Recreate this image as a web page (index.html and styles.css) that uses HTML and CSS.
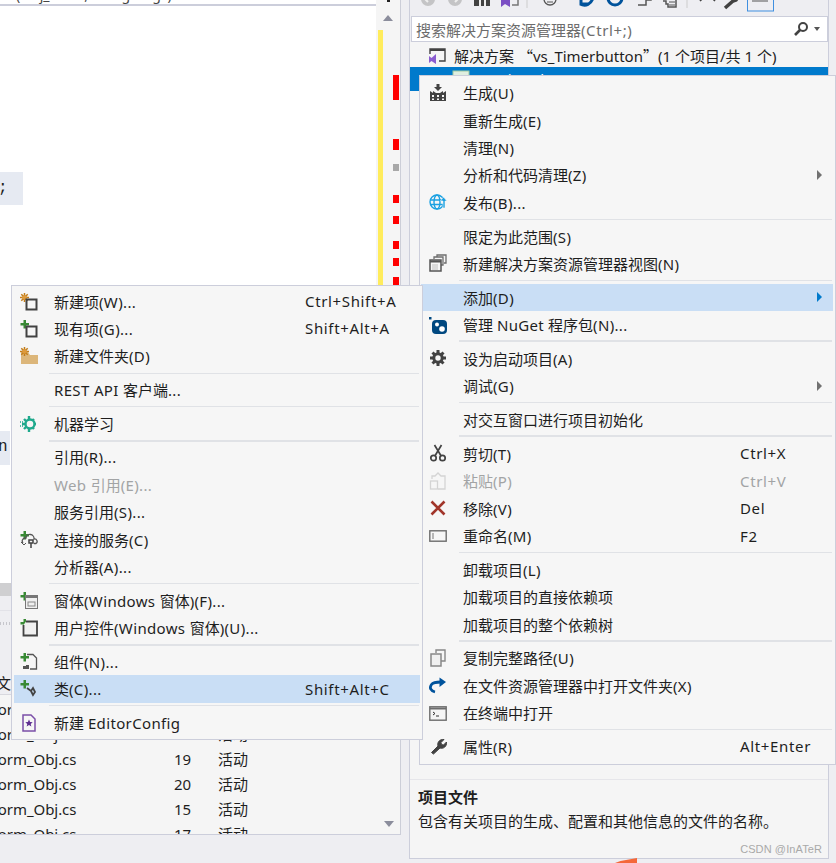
FILE: index.html
```html
<!DOCTYPE html>
<html lang="zh">
<head>
<meta charset="utf-8">
<title>vs_Timerbutton</title>
<link rel="stylesheet" href="styles.css">
</head>
<body>
<div class="ide">
  <section class="left-col">
    <div class="editor">
      <div class="code">
        <div class="code-top"><span class="code-top-text">(Obj_Form, string targs)</span></div>
        <div class="code-line hl-a">;</div>
        <div class="code-line hl-b">n</div>
        <div class="hscroll"></div>
      </div>
      <div class="overview">
        <span class="ov-arrow-top"></span>
        <span class="ov-arrow-up"></span>
        <span class="ov-yellow"></span>
        <span class="ov-mark" style="top:75px;height:25px"></span>
        <span class="ov-mark" style="top:139px;height:11px"></span>
        <span class="ov-mark grey" style="top:164px;height:7px"></span>
        <span class="ov-mark" style="top:195px;height:8px"></span>
        <span class="ov-mark" style="top:216px;height:8px"></span>
        <span class="ov-mark" style="top:241px;height:8px"></span>
        <span class="ov-mark" style="top:258px;height:8px"></span>
        <span class="ov-mark" style="top:277px;height:8px"></span>
      </div>
    </div>
    <div class="errors">
      <div class="errors-head"><span class="grip"></span><span class="col-head">文件</span></div>
      <div class="errors-rows">
        <div class="e-row"><span class="e-file">Form_Obj.cs</span><span class="e-num">18</span><span class="e-state">活动</span></div>
        <div class="e-row"><span class="e-file">Form_Obj.cs</span><span class="e-num">18</span><span class="e-state">活动</span></div>
        <div class="e-row"><span class="e-file">Form_Obj.cs</span><span class="e-num">19</span><span class="e-state">活动</span></div>
        <div class="e-row"><span class="e-file">Form_Obj.cs</span><span class="e-num">20</span><span class="e-state">活动</span></div>
        <div class="e-row"><span class="e-file">Form_Obj.cs</span><span class="e-num">15</span><span class="e-state">活动</span></div>
        <div class="e-row"><span class="e-file">Form_Obj.cs</span><span class="e-num">17</span><span class="e-state">活动</span></div>
        <span class="e-down"></span>
      </div>
    </div>
  </section>

  <section class="right-col">
    <div class="panel">
      <div class="toolbar">
        <svg class="tb-svg" width="364" height="22" viewBox="0 0 364 22">
          <circle cx="8" cy="5" r="7" fill="#c4c4c6"/><path d="M11 5H5M8 2L5 5l3 3" stroke="#eee" stroke-width="2" fill="none"/>
          <circle cx="35" cy="5" r="7" fill="#c4c4c6"/><path d="M32 5h6M35 2l3 3-3 3" stroke="#eee" stroke-width="2" fill="none"/>
          <path d="M54 0h16v12H54z" fill="#424242"/><path d="M59 6h2v6h-2zM64 6h2v6h-2z" fill="#eee"/>
          <path d="M81 3l4 3 5-5v12l-5-3-4 3z" fill="#7b4fc4"/><path d="M92 5h6v6h-6" fill="none" stroke="#777" stroke-width="1.5"/>
          <path d="M107 0v14" stroke="#ccc"/>
          <circle cx="130" cy="5" r="6" fill="none" stroke="#555" stroke-width="1.3"/><path d="M127 8h6" stroke="#555"/>
          <path d="M160 10c6 3 11 0 13-6M161 3v7h8" fill="none" stroke="#00539c" stroke-width="3"/>
          <circle cx="195" cy="4" r="7" fill="none" stroke="#00539c" stroke-width="3"/>
          <path d="M218 11h8V3M226 6h5V3" fill="none" stroke="#555" stroke-width="1.5"/>
          <path d="M243 7h3v3h2v3h8V3" fill="none" stroke="#555" stroke-width="1.5"/><path d="M249 8h6M249 11h6" stroke="#555"/>
          <path d="M267 0v14" stroke="#ccc"/>
          <path d="M283 4l-3 3M292 4l3 3" stroke="#424242" stroke-width="1.6" fill="none"/>
          <path d="M305 14l8-7 3-1 3-4" stroke="#424242" stroke-width="3.5" fill="none"/>
          <rect x="327.500" y="0" width="26" height="17" fill="none" stroke="#3f8fe0"/><path d="M332 7h16" stroke="#555"/>
        </svg>
      </div>
      <div class="search">
        <span class="search-text">搜索解决方案资源管理器<span class="wide">(Ctrl+;)</span></span>
        <svg width="16" height="16" viewBox="0 0 16 16" class="search-icon"><circle cx="10" cy="6" r="4" fill="none" stroke="#424242" stroke-width="2"/><path d="M7 9l-5 5" stroke="#424242" stroke-width="2.600"/></svg>
        <span class="search-caret"></span>
      </div>
      <div class="tree">
        <div class="tree-row">
          <svg width="18" height="18" viewBox="0 0 18 18"><path d="M2 7V2h15v12h-6" fill="none" stroke="#424242" stroke-width="1.400"/><path d="M2 3h15" stroke="#424242" stroke-width="2"/><path d="M1 9l2.500 2L8 7v10l-4.500-3L1 16z" fill="#8a5cd0"/></svg>
          <span class="tree-text">解决方案 <span class="cjk-q">“</span>vs_Timerbutton<span class="cjk-q">”</span>(1 个项目/共 1 个)</span>
        </div>
        <div class="tree-row sel">
          <svg width="18" height="18" viewBox="0 0 18 18"><rect x="1" y="1" width="16" height="16" fill="#dfeee0" stroke="#9fc99f"/></svg>
          <span>vs_Timerbutton</span>
        </div>
      </div>
      <div class="props">
        <div class="props-title">项目文件</div>
        <div class="props-desc">包含有关项目的生成、配置和其他信息的文件的名称。</div>
        <div class="watermark">CSDN @InATeR</div>
      </div>
    </div>
    <span class="orange"></span>
  </section>
</div>

<nav class="menu menu-main">
  <div class="mi"><span class="ic"><svg width="18" height="18" viewBox="0 0 18 18"><path d="M7.500 0h3v3H13L9 7 5 3h2.500z" fill="#424242"/><path d="M1 7l3 2V7l3 2 4 0 3-2v2l3-2v10H1z" fill="#424242"/><path d="M3 11h2v2H3zM8 11h2v2H8zM13 11h2v2h-2zM3 14.500h2v1.500H3zM8 14.500h2v1.500H8zM13 14.500h2v1.500h-2z" fill="#f6f6f6"/></svg></span><span class="lb">生成<span class="lat">(U)</span></span></div>
  <div class="mi"><span class="ic"></span><span class="lb">重新生成<span class="lat">(E)</span></span></div>
  <div class="mi"><span class="ic"></span><span class="lb">清理<span class="lat">(N)</span></span></div>
  <div class="mi"><span class="ic"></span><span class="lb">分析和代码清理<span class="lat">(Z)</span></span><span class="sub"></span></div>
  <div class="mi"><span class="ic"><svg width="18" height="18" viewBox="0 0 18 18"><g fill="none" stroke="#1ba1e2" stroke-width="1.400"><circle cx="8" cy="9" r="7"/><ellipse cx="8" cy="9" rx="3" ry="7"/><path d="M1 7h14M1 11.500h14"/></g><path d="M14 15V8h-2.500L14.500 4l3.500 4h-2v7z" fill="#1ba1e2" stroke="#f6f6f6" stroke-width=".6"/></svg></span><span class="lb">发布<span class="lat">(B)...</span></span></div>
  <div class="sp"></div>
  <div class="mi"><span class="ic"></span><span class="lb">限定为此范围<span class="lat">(S)</span></span></div>
  <div class="mi"><span class="ic"><svg width="18" height="18" viewBox="0 0 18 18"><g fill="none" stroke="#6d6d6d" stroke-width="1.300"><path d="M5 5V3h9v8h-2"/><path d="M8 3V1h9v8h-2"/></g><rect x="1" y="6" width="11" height="11" fill="#f6f6f6" stroke="#555" stroke-width="1.500"/><path d="M1 7.500h11" stroke="#555" stroke-width="2"/><path d="M3.500 11h6M3.500 13h6M3.500 15h6" stroke="#888" stroke-dasharray="1 1"/></svg></span><span class="lb">新建解决方案资源管理器视图<span class="lat">(N)</span></span></div>
  <div class="sp"></div>
  <div class="mi on"><span class="ic"></span><span class="lb">添加<span class="lat">(D)</span></span><span class="sub blue"></span></div>
  <div class="mi"><span class="ic"><svg width="18" height="18" viewBox="0 0 18 18"><rect x="3" y="4" width="15" height="14" rx="4" fill="#004880"/><rect x="0" y="1" width="2.500" height="2.500" fill="#004880"/><circle cx="8" cy="8.500" r="2" fill="#fff"/><circle cx="13" cy="13" r="2.800" fill="#fff"/></svg></span><span class="lb">管理 <span class="lat">NuGet</span> 程序包<span class="lat">(N)...</span></span></div>
  <div class="sp bold"></div>
  <div class="mi"><span class="ic"><svg width="18" height="18" viewBox="0 0 18 18"><path d="M9 1v16M1 9h16M3.500 3.500l11 11M14.500 3.500l-11 11" stroke="#424242" stroke-width="3"/><circle cx="9" cy="9" r="4.200" fill="#f6f6f6" stroke="#424242" stroke-width="3"/></svg></span><span class="lb">设为启动项目<span class="lat">(A)</span></span></div>
  <div class="mi"><span class="ic"></span><span class="lb">调试<span class="lat">(G)</span></span><span class="sub"></span></div>
  <div class="sp"></div>
  <div class="mi"><span class="ic"></span><span class="lb">对交互窗口进行项目初始化</span></div>
  <div class="sp bold"></div>
  <div class="mi"><span class="ic"><svg width="18" height="18" viewBox="0 0 18 18"><g fill="none" stroke="#424242" stroke-width="1.700"><circle cx="4.500" cy="14" r="2.700"/><circle cx="13.500" cy="14" r="2.700"/><path d="M6 11.800L12.500 1M12 11.800L5.500 1"/></g></svg></span><span class="lb">剪切<span class="lat">(T)</span></span><span class="sc">Ctrl+X</span></div>
  <div class="mi dis"><span class="ic"><svg width="18" height="18" viewBox="0 0 18 18"><g fill="none" stroke="#d4d4d4" stroke-width="1.300"><path d="M3 7V4h3l3-3 3 3h4v13H9"/><rect x="1.500" y="9" width="7" height="8"/></g></svg></span><span class="lb">粘贴<span class="lat">(P)</span></span><span class="sc">Ctrl+V</span></div>
  <div class="mi"><span class="ic"><svg width="18" height="18" viewBox="0 0 18 18"><path d="M2.500 2.500l13 13M15.500 2.500l-13 13" stroke="#a1352a" stroke-width="2.600"/></svg></span><span class="lb">移除<span class="lat">(V)</span></span><span class="sc">Del</span></div>
  <div class="mi"><span class="ic"><svg width="18" height="18" viewBox="0 0 18 18"><rect x=".8" y="3.800" width="16.400" height="10.400" fill="#f6f6f6" stroke="#6d6d6d" stroke-width="1.400"/><path d="M4 6v6" stroke="#777"/></svg></span><span class="lb">重命名<span class="lat">(M)</span></span><span class="sc">F2</span></div>
  <div class="sp"></div>
  <div class="mi"><span class="ic"></span><span class="lb">卸载项目<span class="lat">(L)</span></span></div>
  <div class="mi"><span class="ic"></span><span class="lb">加载项目的直接依赖项</span></div>
  <div class="mi"><span class="ic"></span><span class="lb">加载项目的整个依赖树</span></div>
  <div class="sp bold"></div>
  <div class="mi"><span class="ic"><svg width="18" height="18" viewBox="0 0 18 18"><path d="M7 4V1h9v11h-4" fill="none" stroke="#888" stroke-width="1.400"/><rect x="2" y="5" width="10" height="12" fill="#f0f0f0" stroke="#888" stroke-width="1.500"/></svg></span><span class="lb">复制完整路径<span class="lat">(U)</span></span></div>
  <div class="mi"><span class="ic"><svg width="18" height="18" viewBox="0 0 18 18"><path d="M6 16C2 15 0 12 2.500 8.500 4 6.500 7 6 12 6" fill="none" stroke="#00539c" stroke-width="2.800"/><path d="M10.500 1.500L17 6l-6.500 5z" fill="#00539c"/></svg></span><span class="lb">在文件资源管理器中打开文件夹<span class="lat">(X)</span></span></div>
  <div class="mi"><span class="ic"><svg width="18" height="18" viewBox="0 0 18 18"><rect x=".8" y="2.800" width="16.400" height="13.400" fill="#f6f6f6" stroke="#6d6d6d" stroke-width="1.400"/><path d="M1 4.500h16" stroke="#6d6d6d" stroke-width="2"/><path d="M4 8l2 1.500L4 11M7 12h3" fill="none" stroke="#333" stroke-width="1"/></svg></span><span class="lb">在终端中打开</span></div>
  <div class="sp"></div>
  <div class="mi"><span class="ic"><svg width="18" height="18" viewBox="0 0 18 18"><path d="M2.500 15.500L9 9c-1-3 1-7 6-6.500L12 5.500l.5 2 2 .5 3-3c.5 5-3.500 7-6.500 6l-6.500 6z" fill="#424242" stroke="#424242"/></svg></span><span class="lb">属性<span class="lat">(R)</span></span><span class="sc">Alt+Enter</span></div>
</nav>

<nav class="menu menu-add">
  <div class="mi"><span class="ic"><svg width="18" height="18" viewBox="0 0 18 18"><use href="#star"/><rect x="6.500" y="6.500" width="10" height="10" fill="none" stroke="#424242" stroke-width="2"/></svg></span><span class="lb">新建项<span class="lat">(W)...</span></span><span class="sc">Ctrl+Shift+A</span></div>
  <div class="mi"><span class="ic"><svg width="18" height="18" viewBox="0 0 18 18"><use href="#plus"/><rect x="6.500" y="6.500" width="10" height="10" fill="none" stroke="#424242" stroke-width="2"/></svg></span><span class="lb">现有项<span class="lat">(G)...</span></span><span class="sc">Shift+Alt+A</span></div>
  <div class="mi"><span class="ic"><svg width="18" height="18" viewBox="0 0 18 18"><path d="M1 5h7l2 3h8v9H1z" fill="#dcb67a"/><use href="#star"/></svg></span><span class="lb">新建文件夹<span class="lat">(D)</span></span></div>
  <div class="sp"></div>
  <div class="mi"><span class="ic"></span><span class="lb"><span class="lat">REST API </span>客户端<span class="lat">...</span></span></div>
  <div class="sp"></div>
  <div class="mi"><span class="ic"><svg width="18" height="18" viewBox="0 0 18 18"><path d="M9 1v16M2 9h14M4 4l10 10M14 4L4 14" stroke="#1fa98c" stroke-width="2.400"/><circle cx="10" cy="9" r="4.500" fill="#f6f6f6" stroke="#1fa98c" stroke-width="2.400"/><path d="M0 7h3M0 11h3" stroke="#1fa98c" stroke-width="1.400" stroke-dasharray="1 1"/></svg></span><span class="lb">机器学习</span></div>
  <div class="sp bold"></div>
  <div class="mi"><span class="ic"></span><span class="lb">引用<span class="lat">(R)...</span></span></div>
  <div class="mi dis"><span class="ic"></span><span class="lb"><span class="lat">Web </span>引用<span class="lat">(E)...</span></span></div>
  <div class="mi"><span class="ic"></span><span class="lb">服务引用<span class="lat">(S)...</span></span></div>
  <div class="mi"><span class="ic"><svg width="18" height="18" viewBox="0 0 18 18"><use href="#plus"/><path d="M3 12a3 3 0 0 1 2-5h1a4 4 0 0 1 8 1 2.500 2.500 0 0 1 2 4.500H14" fill="none" stroke="#555" stroke-width="1.300"/><path d="M9 9h4v3h-4zM11 12v5" fill="none" stroke="#424242" stroke-width="1.500"/><path d="M1 11l3 3 2-2" fill="none" stroke="#555"/></svg></span><span class="lb">连接的服务<span class="lat">(C)</span></span></div>
  <div class="mi"><span class="ic"></span><span class="lb">分析器<span class="lat">(A)...</span></span></div>
  <div class="sp"></div>
  <div class="mi"><span class="ic"><svg width="18" height="18" viewBox="0 0 18 18"><use href="#plus"/><rect x="5.500" y="3.500" width="12" height="13" fill="#f0f0f0" stroke="#777"/><path d="M6 5h11" stroke="#777" stroke-width="2"/><rect x="8" y="10" width="7" height="4" fill="none" stroke="#888"/></svg></span><span class="lb">窗体<span class="lat">(Windows </span>窗体<span class="lat">)(F)...</span></span></div>
  <div class="mi"><span class="ic"><svg width="18" height="18" viewBox="0 0 18 18"><use href="#plus"/><path d="M6 2.500h11v14H3.500V6" fill="#f0f0f0" stroke="#424242" stroke-width="1.800"/></svg></span><span class="lb">用户控件<span class="lat">(Windows </span>窗体<span class="lat">)(U)...</span></span></div>
  <div class="sp bold"></div>
  <div class="mi"><span class="ic"><svg width="18" height="18" viewBox="0 0 18 18"><use href="#plus"/><path d="M7 1.500h6l3.500 3.500v11H10" fill="none" stroke="#555" stroke-width="1.300"/><path d="M3 13h3v3H3zM6 12h3v4H6z" fill="#555"/></svg></span><span class="lb">组件<span class="lat">(N)...</span></span></div>
  <div class="mi on"><span class="ic"><svg width="18" height="18" viewBox="0 0 18 18"><use href="#plus"/><path d="M7 8l4 3 2-3 2 4-2 3-2-4" fill="none" stroke="#424242" stroke-width="1.800"/></svg></span><span class="lb">类<span class="lat">(C)...</span></span><span class="sc">Shift+Alt+C</span></div>
  <div class="sp"></div>
  <div class="mi"><span class="ic"><svg width="18" height="18" viewBox="0 0 18 18"><path d="M3 1h8l4 4v12H3z" fill="#f6f6f6" stroke="#7b4fa8" stroke-width="1.500"/><path d="M9 5.500l1.100 2.500 2.600.2-2 1.700.7 2.600L9 11.100l-2.400 1.400.7-2.600-2-1.700 2.600-.2z" fill="#5e2d91"/></svg></span><span class="lb">新建 <span class="lat">EditorConfig</span></span></div>
</nav>

<svg class="defs" width="0" height="0">
  <defs>
    <g id="plus"><path d="M3.500 0h2.500v3H9v2.500H6v3H3.500v-3H.5V3h3z" fill="#388a34"/></g>
    <g id="star"><path d="M4.500 0v9M0 4.500h9M1.300 1.300l6.400 6.400M7.700 1.300L1.300 7.700" stroke="#c27d1a" stroke-width="1.500"/><circle cx="4.500" cy="4.500" r="2.300" fill="#dd9a3c"/></g>
  </defs>
</svg>
</body>
</html>
```
FILE: styles.css
```css
* { box-sizing: border-box; }
html, body { margin: 0; padding: 0; }
body {
  width: 836px;
  height: 863px;
  overflow: hidden;
  position: relative;
  background: #eeeef2;
  color: #1e1e1e;
  font-family: "Noto Sans", "Noto Sans CJK SC", sans-serif;
  font-size: 15px;
}
.ide { display: flex; height: 863px; }
.lat { letter-spacing: .35px; }
.wide { letter-spacing: .6px; }
.cjk-q { font-family: "Noto Sans CJK SC", sans-serif; }

/* left column */
.left-col { width: 401px; height: 835px; display: flex; flex-direction: column; border-right: 1px solid #ccced8; }
.editor { display: flex; height: 596px; }
.code { width: 376px; position: relative; background: #fff; overflow: hidden; }
.code-top { height: 6px; overflow: hidden; border-bottom: 2px solid #cccedb; padding-left: 16px; color: #444; font-size: 14px; }
.code-top-text { display: block; line-height: 14px; margin-top: -12px; }
.code-line { background: #e6eaf2; font-family: "Liberation Mono", monospace; font-size: 16px; position: absolute; left: 0; }
.hl-a { top: 172px; width: 23px; height: 33px; line-height: 33px; text-indent: -2px; }
.hl-b { top: 431px; width: 10px; height: 34px; line-height: 32px; text-indent: -2px; overflow: hidden; }
.hscroll { position: absolute; left: 0; right: 0; top: 583px; height: 13px; background: #cfcfd1; }
.overview { width: 24px; position: relative; background: #f5f5f5; }
.ov-arrow-top { position: absolute; left: 11px; top: 0; width: 3px; height: 2px; background: #222; }
.ov-arrow-up { position: absolute; left: 7px; top: 15px; border: 5px solid transparent; border-top: 0; border-bottom: 6px solid #8b8d9c; }
.ov-yellow { position: absolute; left: 2px; top: 30px; bottom: 0; width: 5px; background: #ffec5c; }
.ov-mark { position: absolute; left: 17px; width: 6px; background: #ff0000; }
.ov-mark.grey { background: #a8a8a8; }

.errors { flex: 1; display: flex; flex-direction: column; overflow: hidden; border-bottom: 1px solid #cccedb; }
.errors-head { height: 85px; margin-top: 14px; border-top: 1px solid #e2e2e8; border-bottom: 1px solid #d8d8de; background: #eeeef2; position: relative; }
.grip { position: absolute; left: 0; top: 11px; width: 10px; height: 3px; background: repeating-linear-gradient(90deg, #c6c6cc 0 1px, transparent 1px 3px); }
.col-head { position: absolute; left: -4px; top: 62px; line-height: 20px; }
.errors-rows { flex: 1; background: #f5f5f5; position: relative; overflow: hidden; padding-top: 2px; }
.e-row { height: 25px; line-height: 25px; display: flex; white-space: nowrap; margin-left: -10px; }
.e-file { width: 184px; letter-spacing: -.05px; }
.e-num { width: 44px; }
.e-down { position: absolute; left: 384px; bottom: 7px; border: 5px solid transparent; border-bottom: 0; border-top: 6px solid #8b8d9c; }

/* right column */
.right-col { flex: 1; position: relative; padding-left: 8px; }
.panel { width: 420px; height: 859px; display: flex; flex-direction: column; border: 1px solid #cccedb; border-top: 0; }
.toolbar { height: 16px; overflow: hidden; }
.tb-svg { display: block; margin-left: 10px; margin-top: -6px; }
.search { margin-left: 1px; width: 417px; height: 26px; background: #fff; border: 1px solid #cccedb; display: flex; align-items: center; padding: 0 5px 0 4px; }
.search-text { flex: 1; color: #6d6d6d; white-space: nowrap; }
.search-icon { margin-right: 5px; }
.search-caret { border: 3.500px solid transparent; border-top: 4px solid #555; border-bottom: 0; margin-right: 2px; }
.tree { flex: 1; background: #f5f5f5; padding-top: 2px; }
.tree-row { height: 23px; display: flex; align-items: center; gap: 8px; padding-left: 18px; white-space: nowrap; line-height: 23px; }
.tree-text { padding-top: 1px; }
.tree-row.sel { background: #007acc; color: #fff; padding-left: 42px; height: 24px; width: 418px; }
.props { height: 79px; background: #f5f5f5; border-top: 1px solid #e6e6ea; padding: 5px 8px 0; position: relative; }
.props-title { font-weight: 700; line-height: 24px; }
.props-desc { line-height: 24px; white-space: nowrap; }
.watermark { position: absolute; right: 6px; bottom: 1px; color: #a9a9a9; font-family: "Liberation Sans", sans-serif; font-size: 11px; line-height: 16px; letter-spacing: .1px; }
.orange { position: absolute; left: 214px; bottom: 0; width: 22px; height: 5px; background: #f4683a; clip-path: polygon(25% 60%, 100% 0, 100% 100%, 0 100%); }

/* menus */
.menu { position: absolute; background: #f6f6f6; border: 1px solid #cccedb; }
.menu-main { left: 419px; top: 75px; width: 417px; padding: 3px 2px 3.400px 1px; }
.menu-add { left: 11px; top: 285px; width: 412px; padding: 1.900px 2px 2.400px; }
.mi { height: 27.400px; display: flex; align-items: center; white-space: nowrap; position: relative; }
.mi.on { background: #c9def5; }
.mi.dis { color: #a2a4a5; }
.ic { display: flex; justify-content: center; align-items: center; flex: none; }
.ic svg { display: block; }
.menu-main .ic { width: 34px; margin-right: 8px; }
.menu-add .ic { width: 30px; margin-right: 10px; }
.lb { flex: 1; }
.sc { letter-spacing: .65px; }
.menu-add .lb, .menu-add .sc { padding-bottom: 1px; }
.menu-main .sc { width: 93px; }
.menu-add .sc { width: 115px; }
.sp { height: 6.400px; display: flex; align-items: center; }
.sp::after { content: ""; flex: 1; height: 1px; background: #e0e2e6; }
.sp.bold::after { height: 2px; }
.menu-main .sp { margin-left: 38px; margin-right: 1px; }
.menu-add .sp { height: 6.300px; margin-left: 35px; margin-right: 1px; }
.sub { position: absolute; right: 11px; top: 50%; margin-top: -5px; border: 5px solid transparent; border-right: 0; border-left: 5px solid #717171; }
.sub.blue { border-left-color: #007acc; }
.defs { position: absolute; }
```
